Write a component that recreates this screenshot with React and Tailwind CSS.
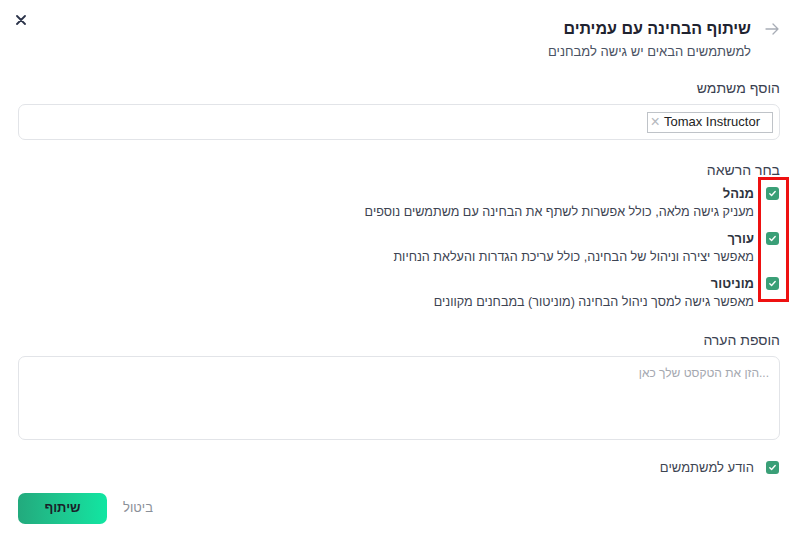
import { useState } from "react";

function Check({ checked, onChange }) {
  return (
    <button
      type="button"
      onClick={onChange}
      className={`w-[13px] h-[13px] rounded-[3px] flex items-center justify-center shrink-0 ${
        checked ? "bg-[#3a9f77]" : "border border-gray-400 bg-white"
      }`}
    >
      {checked && (
        <svg width="9" height="9" viewBox="0 0 10 10" fill="none">
          <path d="M2 5.2l2 2 4-4.4" stroke="white" strokeWidth="1.5" strokeLinecap="round" strokeLinejoin="round" />
        </svg>
      )}
    </button>
  );
}

const roles = [
  { key: "admin", title: "מנהל", desc: "מעניק גישה מלאה, כולל אפשרות לשתף את הבחינה עם משתמשים נוספים" },
  { key: "editor", title: "עורך", desc: "מאפשר יצירה וניהול של הבחינה, כולל עריכת הגדרות והעלאת הנחיות" },
  { key: "monitor", title: "מוניטור", desc: "מאפשר גישה למסך ניהול הבחינה (מוניטור) במבחנים מקוונים" },
];

export default function App() {
  const [perms, setPerms] = useState({ admin: true, editor: true, monitor: true });
  const [notify, setNotify] = useState(true);
  const [note, setNote] = useState("");

  return (
    <div
      dir="rtl"
      className="relative w-[798px] h-[539px] bg-white text-[#2d3340] px-[18px]"
      style={{ fontFamily: '"Liberation Sans", Arial, sans-serif' }}
    >
      <button className="absolute left-[15px] top-[14px] w-[12px] h-[12px] flex items-center justify-center">
        <svg width="10" height="10" viewBox="0 0 10 10">
          <path d="M1 1l8 8M9 1l-8 8" stroke="#2b3349" strokeWidth="1.8" strokeLinecap="round" />
        </svg>
      </button>

      <div className="pt-[19px] flex items-start gap-[14px] pr-[1px]">
        <svg width="14" height="14" viewBox="0 0 14 14" className="mt-[3px]" fill="none">
          <path d="M1 7h12M8 2l5 5-5 5" stroke="#a8adb6" strokeWidth="1.3" strokeLinecap="round" strokeLinejoin="round" />
        </svg>
        <div>
          <div className="text-[16px] font-bold text-[#1f2330] leading-[20px]">שיתוף הבחינה עם עמיתים</div>
          <div className="text-[13px] text-[#4a5263] mt-[5px] leading-[16px]">למשתמשים הבאים יש גישה למבחנים</div>
        </div>
      </div>

      <div className="mt-[19px] text-[14px] font-medium text-[#3a4150] leading-[18px]">הוסף משתמש</div>
      <div className="mt-[7px] h-[36px] border border-[#e2e4e8] rounded-[7px] flex items-center px-[6px]">
        <span
          dir="ltr"
          className="h-[21px] border border-[#bfc3c8] flex items-center pl-[3px] pr-[12px] gap-[4px] text-[13px] text-[#222]"
        >
          <span className="text-[#b5b9be] text-[16px] leading-none">×</span>
          Tomax Instructor
        </span>
      </div>

      <div className="mt-[21px] text-[14px] text-[#3a4150] leading-[18px]">בחר הרשאה</div>

      <div className="relative mt-[7px] flex flex-col gap-[11px]">
        <div className="absolute -right-[9px] -top-[9px] w-[31px] h-[125px] border-[3px] border-[#ee1111] pointer-events-none" />
        {roles.map((r) => (
          <div key={r.key} className="flex items-start gap-[12px] pr-[1px]">
            <div className="mt-[1px]">
              <Check checked={perms[r.key]} onChange={() => setPerms({ ...perms, [r.key]: !perms[r.key] })} />
            </div>
            <div>
              <div className="text-[13px] font-bold text-[#2d3340] leading-[15px]">{r.title}</div>
              <div className="text-[12.6px] text-[#3d4452] mt-[4px] leading-[15px]">{r.desc}</div>
            </div>
          </div>
        ))}
      </div>

      <div className="mt-[21px] text-[14px] font-medium text-[#3a4150] leading-[18px]">הוספת הערה</div>
      <textarea
        value={note}
        onChange={(e) => setNote(e.target.value)}
        placeholder="...הזן את הטקסט שלך כאן"
        className="mt-[7px] block w-full h-[84px] border border-[#e2e4e8] rounded-[7px] px-[10px] py-[7px] text-[12px] resize-none outline-none placeholder:text-[#a4a8b0]"
      />

      <div className="mt-[18px] flex items-center gap-[12px] pr-[1px]">
        <Check checked={notify} onChange={() => setNotify(!notify)} />
        <span className="text-[13px] text-[#3d4452]">הודע למשתמשים</span>
      </div>

      <div dir="ltr" className="mt-[15px] flex items-center gap-[16px]">
        <button className="w-[89px] h-[31px] rounded-[7px] bg-gradient-to-r from-[#22aa7d] to-[#10e6a2] text-[13px] font-bold text-[#1a1f2a]">
          שיתוף
        </button>
        <button className="text-[13px] text-[#8a8f98]">ביטול</button>
      </div>
    </div>
  );
}
